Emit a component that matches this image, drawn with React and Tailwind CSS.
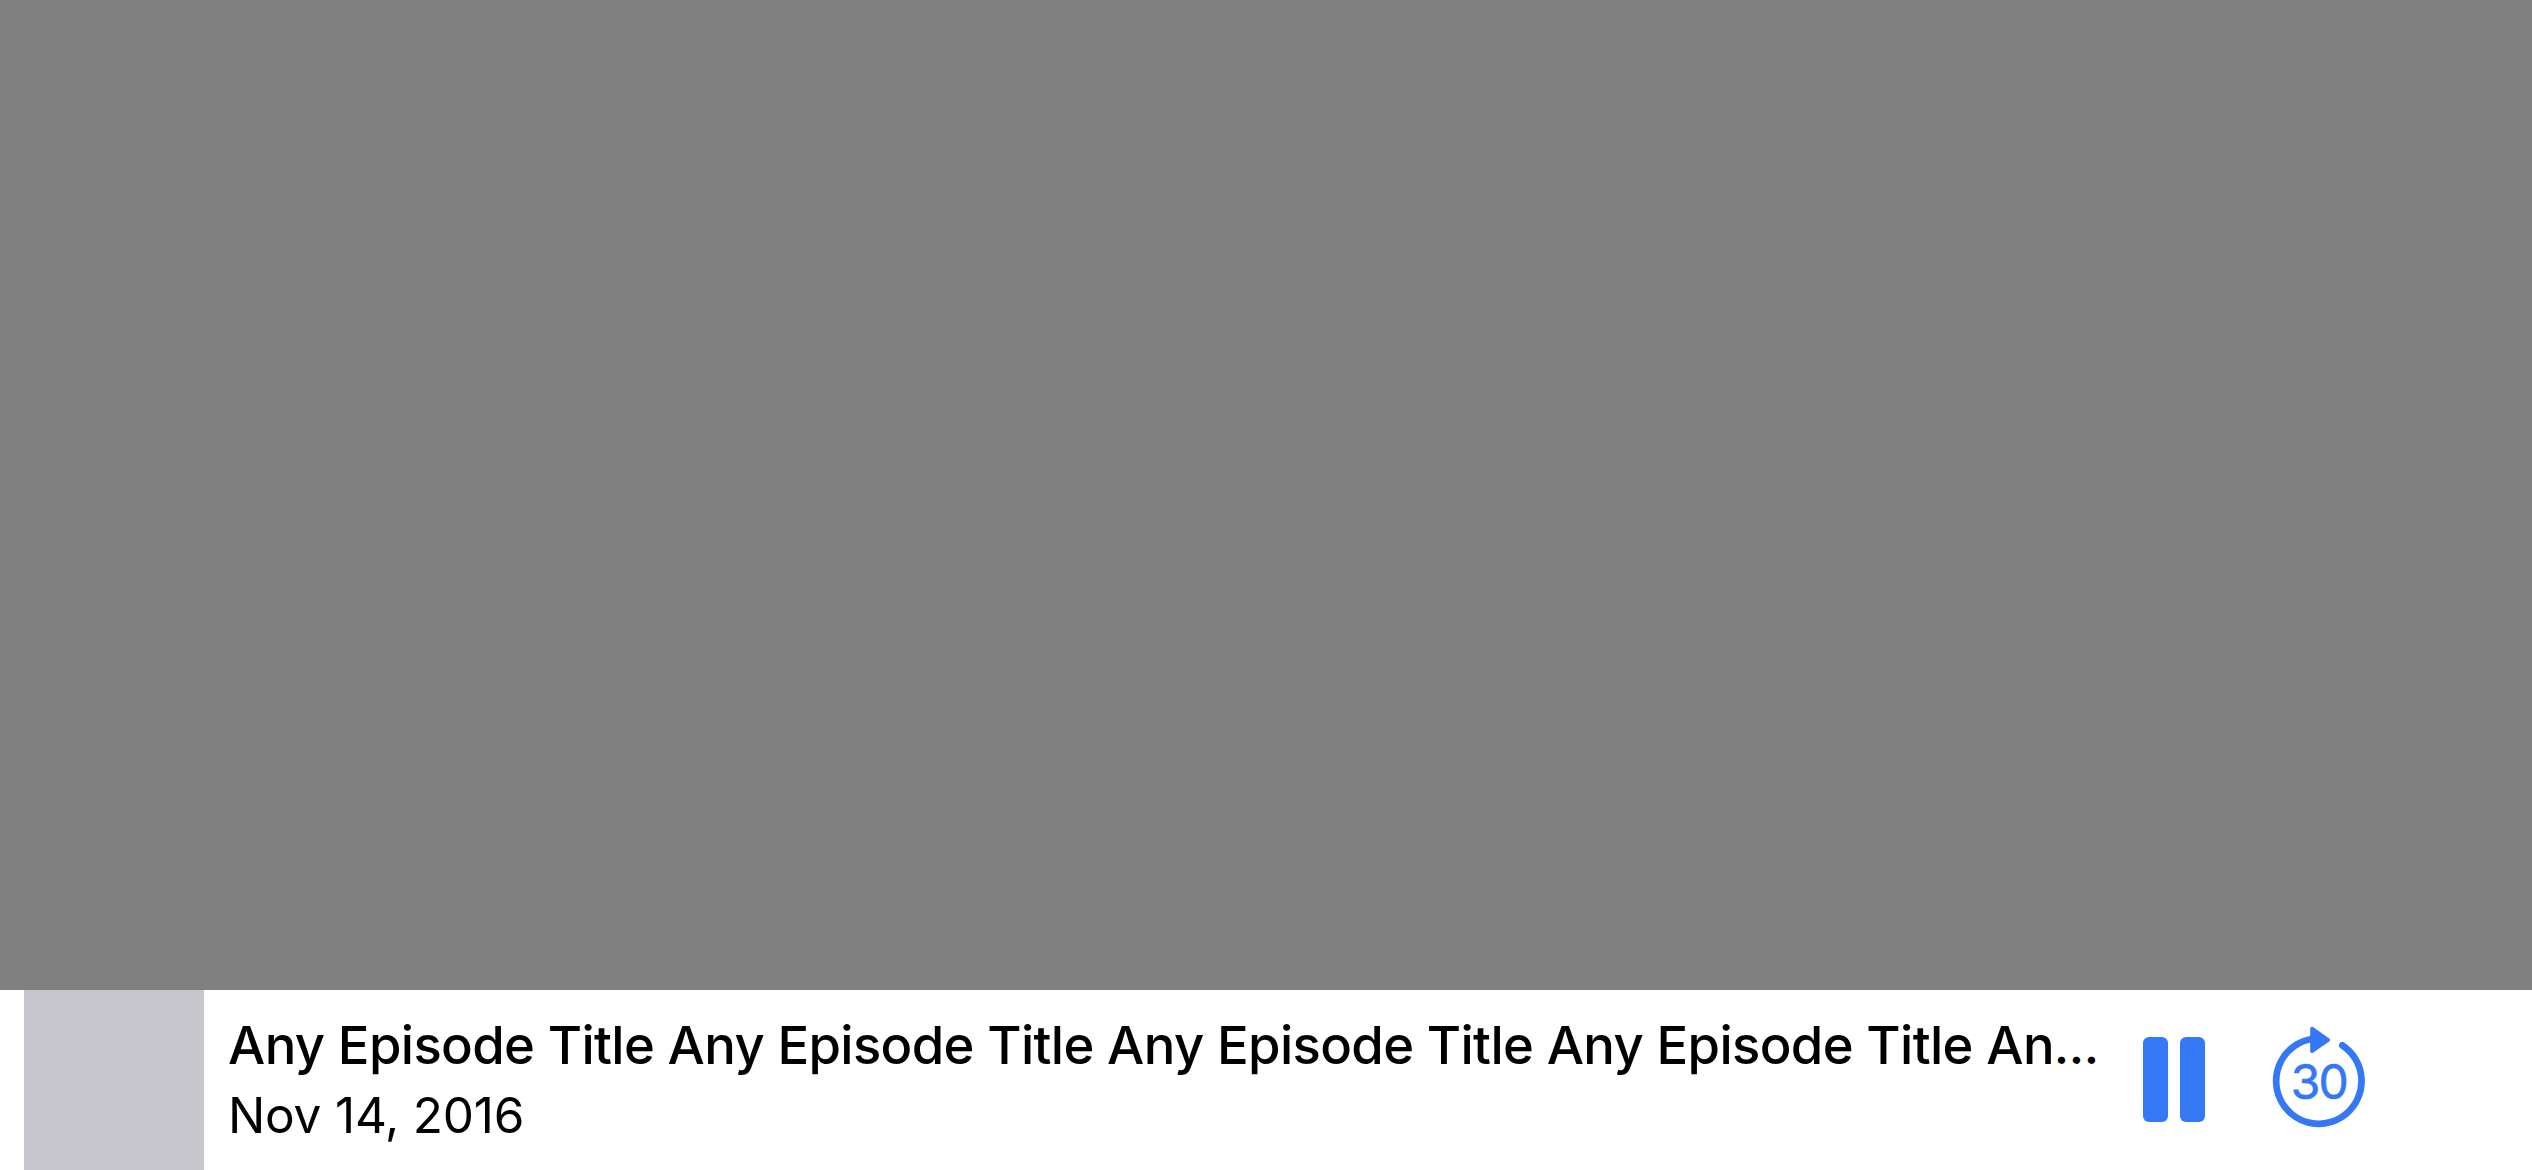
const title = "Any Episode Title Any Episode Title Any Episode Title Any Episode Title An";

function SkipForward30() {
  return (
    <svg viewBox="0 0 140 140" className="h-[140px] w-[140px]" fill="none" aria-hidden="true">
      <path
        d="M92.3 35.4 A42.7 42.7 0 1 1 61.5 29"
        stroke="#3478f6"
        strokeWidth="6.7"
        strokeLinecap="round"
      />
      <path
        d="M62 18.5 L78.2 30 L62 41.2 Z"
        fill="#3478f6"
        stroke="#3478f6"
        strokeWidth="3.6"
        strokeLinejoin="round"
      />
      <text
        x="68.8"
        y="89"
        textAnchor="middle"
        fill="#3478f6"
        stroke="#3478f6"
        strokeWidth="0.6"
        strokeLinejoin="round"
        className="font-['Inter',sans-serif] text-[48px] tracking-[-1.8px]"
      >
        30
      </text>
    </svg>
  );
}

export default function App() {
  return (
    <div className="flex h-[1170px] w-[2532px] flex-col overflow-hidden bg-[#808080] font-['Inter',sans-serif]">
      <div className="flex-1" />
      <footer className="flex h-[180px] bg-white pl-6 text-black">
        <div className="h-[180px] w-[180px] shrink-0 bg-[#c7c6cc]" />
        <div className="flex w-[1890px] shrink-0 flex-col pt-[23px] pl-6 whitespace-nowrap">
          <span className="h-[64px] text-[52.6px] leading-[64px] font-medium tracking-[-0.64px]">
            {title}
            <span className="text-[47px] leading-none font-semibold">…</span>
          </span>
          <span className="text-[49.5px] leading-[76px] tracking-[-0.2px]">Nov 14, 2016</span>
        </div>
        <button aria-label="Pause" className="mt-[47px] ml-[49px] flex h-[85px] shrink-0 gap-[12px]">
          <span className="h-[85px] w-[25px] rounded-[6px] bg-[#3478f6]" />
          <span className="h-[85px] w-[25px] rounded-[6px] bg-[#3478f6]" />
        </button>
        <button aria-label="Skip forward 30 seconds" className="mt-[20px] ml-[45px] h-[140px] w-[140px] shrink-0">
          <SkipForward30 />
        </button>
      </footer>
    </div>
  );
}
